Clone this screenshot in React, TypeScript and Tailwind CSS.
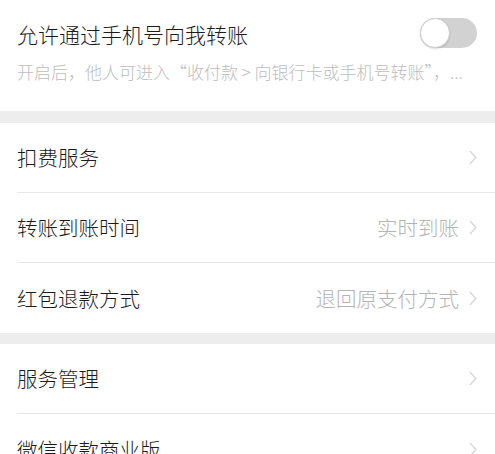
import React from 'react';

const font = { fontFamily: '"Noto Sans CJK SC", "Noto Sans", sans-serif' };

function Chevron() {
  return (
    <svg width="8" height="15" viewBox="0 0 8 15" className="shrink-0">
      <path d="M1 1 L7 7.5 L1 14" fill="none" stroke="#d4d4d4" strokeWidth="1.2" />
    </svg>
  );
}

function Row({ label, value, last }: { label: string; value?: string; last?: boolean }) {
  return (
    <div className="pl-[17px] bg-white">
      <div className={`flex items-center h-[70px] pr-[18px] ${last ? '' : 'border-b border-[#e8e8e8]'}`}>
        <span className="flex-1 text-[20.5px] font-light text-[#1b1b1b] leading-none">{label}</span>
        {value && <span className="text-[20.5px] font-light text-[#b4b4b4] leading-none mr-[10px]">{value}</span>}
        <Chevron />
      </div>
    </div>
  );
}

export default function App() {
  return (
    <div className="w-[495px] h-[454px] overflow-hidden bg-[#ededed]" style={font}>
      <div className="bg-white pl-[17px] pr-[18px] pt-[18px] pb-[29px]">
        <div className="flex items-center h-[30px]">
          <span className="flex-1 text-[21px] font-light text-[#1b1b1b] leading-none mt-[3px]">允许通过手机号向我转账</span>
          <div className="w-[57px] h-[30px] rounded-full bg-[#d2d2d2] relative">
            <div className="absolute left-0 top-0 w-[30px] h-[30px] rounded-full bg-white border border-[#cfcfcf] shadow-[0_1px_2px_rgba(0,0,0,0.15)]" />
          </div>
        </div>
        <p className="mt-[14px] leading-[20px] text-[17px] font-light text-[#bdbdbd] whitespace-nowrap">
          开启后，他人可进入“收付款 &gt; 向银行卡或手机号转账”，...
        </p>
      </div>
      <div className="h-[12px]" />
      <Row label="扣费服务" />
      <Row label="转账到账时间" value="实时到账" />
      <Row label="红包退款方式" value="退回原支付方式" last />
      <div className="h-[11px]" />
      <Row label="服务管理" />
      <Row label="微信收款商业版" last />
    </div>
  );
}
